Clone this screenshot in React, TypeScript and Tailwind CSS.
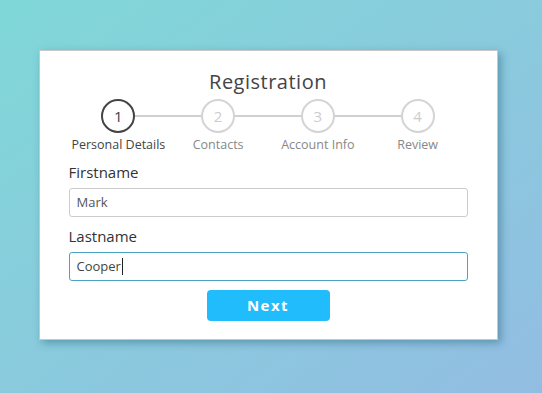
const steps = ['Personal Details', 'Contacts', 'Account Info', 'Review'];

export default function App() {
  return (
    <div
      className="flex h-[393px] w-[542px] items-start justify-center bg-gradient-to-br from-[#7fd8d8] to-[#92bde2] pt-[50px] text-[#444]"
      style={{ fontFamily: '"Open Sans", "DejaVu Sans", sans-serif' }}
    >
      <div className="ml-[-6px] flex h-[290px] w-[459px] flex-col border border-[#c8c8c8] bg-white px-[29px] pt-[17px] shadow-[3px_3px_8px_rgba(0,60,90,0.35)]">
        <h1 className="text-center text-[20px] leading-[28px] tracking-[0.5px] text-[#444]">Registration</h1>

        <div className="relative mt-[3px] grid grid-cols-4">
          <div className="absolute left-[50px] right-[50px] top-[16px] h-[2px] bg-[#d0d0d0]" />
          {steps.map((s, i) => (
            <div key={s} className="relative flex flex-col items-center">
              <div
                className={
                  i === 0
                    ? 'flex h-[34px] w-[34px] items-center justify-center rounded-full border-2 border-[#444] bg-white text-[15px] text-[#444]'
                    : 'flex h-[34px] w-[34px] items-center justify-center rounded-full border-2 border-[#d4d4d4] bg-white text-[15px] text-[#ccc]'
                }
              >
                {i + 1}
              </div>
              <span
                className={
                  i === 0
                    ? 'mt-[3px] text-[12.5px] leading-[18px] text-[#444]'
                    : 'mt-[3px] text-[12.5px] leading-[18px] text-[#888]'
                }
              >
                {s}
              </span>
            </div>
          ))}
        </div>

        <label className="mt-[8px] text-[15px] leading-[20px] text-[#333]">Firstname</label>
        <div className="mt-[6px] flex h-[29px] items-center rounded-[3px] border border-[#ccc] px-[7px] text-[13px] text-[#555]">
          Mark
        </div>

        <label className="mt-[9px] text-[15px] leading-[20px] text-[#333]">Lastname</label>
        <div className="mt-[6px] flex h-[29px] items-center rounded-[3px] border border-[#4aa3c4] px-[7px] text-[13px] text-[#444]">
          Cooper
          <span className="ml-px h-[17px] w-px bg-[#222]" />
        </div>

        <button className="mx-auto mt-[9px] h-[31px] w-[123px] rounded-[4px] bg-[#21bcfb] text-[15px] font-bold tracking-[1.5px] text-white">
          Next
        </button>
      </div>
    </div>
  );
}
